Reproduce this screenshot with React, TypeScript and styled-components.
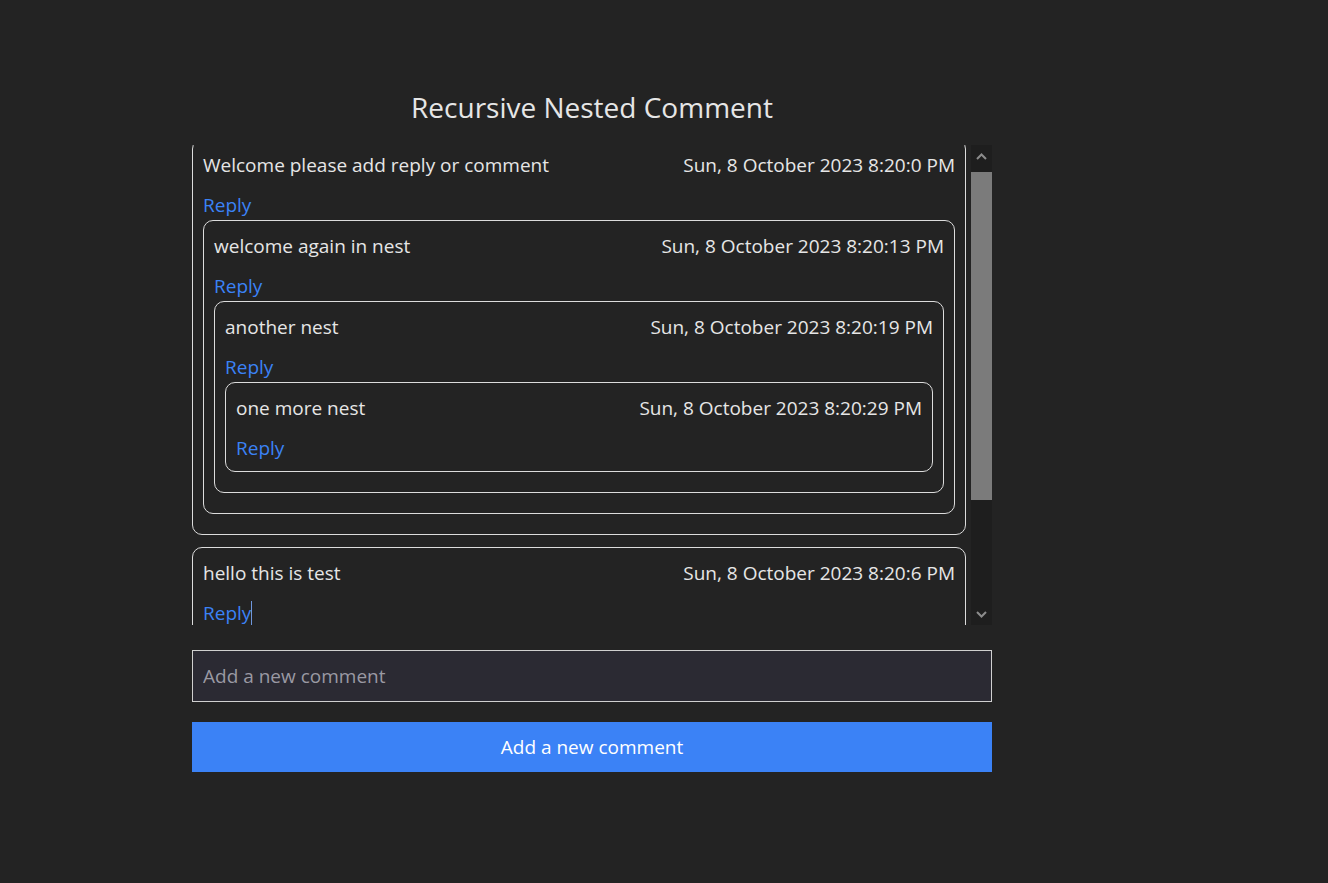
import { useLayoutEffect, useRef } from "react";
import styled, { createGlobalStyle } from "styled-components";

interface CommentData {
  id: number;
  text: string;
  date: string;
  replies: CommentData[];
}

const comments: CommentData[] = [
  {
    id: 1,
    text: "Welcome please add reply or comment",
    date: "Sun, 8 October 2023 8:20:0 PM",
    replies: [
      {
        id: 2,
        text: "welcome again in nest",
        date: "Sun, 8 October 2023 8:20:13 PM",
        replies: [
          {
            id: 3,
            text: "another nest",
            date: "Sun, 8 October 2023 8:20:19 PM",
            replies: [
              {
                id: 4,
                text: "one more nest",
                date: "Sun, 8 October 2023 8:20:29 PM",
                replies: [],
              },
            ],
          },
        ],
      },
    ],
  },
  {
    id: 5,
    text: "hello this is test",
    date: "Sun, 8 October 2023 8:20:6 PM",
    replies: [],
  },
];

const GlobalStyle = createGlobalStyle`
  body {
    margin: 0;
    background: #232323;
    color: #e6e6e6;
    font-family: "Open Sans", "Noto Sans", sans-serif;
  }
`;

const Page = styled.div`
  min-height: 883px;
  padding: 89px 0 0 192px;
  box-sizing: border-box;
`;

const Wrapper = styled.div`
  width: 800px;
  display: flex;
  flex-direction: column;
`;

const Title = styled.h1`
  margin: 0 0 20px;
  font-size: 28px;
  line-height: 36px;
  font-weight: 400;
  text-align: center;
`;

const ScrollArea = styled.div`
  display: flex;
  height: 480px;
`;

const List = styled.div`
  flex: 1;
  overflow: hidden;
`;

const Box = styled.div`
  border: 1px solid #dcdcdc;
  border-radius: 10px;
  padding: 10px 10px 8px;
  margin-bottom: 12px;
`;

const TopBox = styled(Box)`
  margin-right: 5px;
`;

const Row = styled.div`
  display: flex;
  justify-content: space-between;
  font-size: 19px;
  line-height: 30px;
`;

const ReplyLink = styled.div`
  margin-top: 10px;
  font-size: 19px;
  line-height: 30px;
  color: #3b82f6;
  cursor: pointer;
`;

const Caret = styled.span`
  display: inline-block;
  width: 1px;
  height: 24px;
  vertical-align: -5px;
  background: #6f97dc;
`;

const Scrollbar = styled.div`
  width: 21px;
  display: flex;
  flex-direction: column;
  background: #1e1e1e;
`;

const ArrowButton = styled.div`
  height: 22px;
  display: flex;
  align-items: center;
  justify-content: center;
  color: #8c8c8c;
`;

const Track = styled.div`
  flex: 1;
  padding-top: 5px;
`;

const Thumb = styled.div`
  width: 21px;
  height: 328px;
  background: #7b7b7b;
`;

const Input = styled.input`
  margin-top: 25px;
  height: 52px;
  box-sizing: border-box;
  border: 1px solid #d0d0d0;
  background: #2b2a33;
  color: #e6e6e6;
  padding: 0 10px;
  font-family: inherit;
  font-size: 19px;
  outline: none;

  &::placeholder {
    color: #9a99a3;
  }
`;

const AddButton = styled.button`
  margin-top: 20px;
  height: 50px;
  border: none;
  background: #3b82f6;
  color: #fff;
  font-family: inherit;
  font-size: 19px;
  cursor: pointer;
`;

const Chevron = ({ up }: { up?: boolean }) => (
  <svg width="11" height="7" viewBox="0 0 11 7">
    <path
      d={up ? "M1 6 L5.5 1.5 L10 6" : "M1 1 L5.5 5.5 L10 1"}
      fill="none"
      stroke="currentColor"
      strokeWidth="2"
    />
  </svg>
);

const CommentBody = ({ comment, caret }: { comment: CommentData; caret?: boolean }) => (
  <>
    <Row>
      <span>{comment.text}</span>
      <span>{comment.date}</span>
    </Row>
    <ReplyLink>
      Reply
      {caret && <Caret />}
    </ReplyLink>
    {comment.replies.map((reply) => (
      <Box key={reply.id}>
        <CommentBody comment={reply} />
      </Box>
    ))}
  </>
);

const App = () => {
  const listRef = useRef<HTMLDivElement>(null);

  useLayoutEffect(() => {
    if (listRef.current) listRef.current.scrollTop = 6;
  }, []);

  return (
    <Page>
      <GlobalStyle />
      <Wrapper>
        <Title>Recursive Nested Comment</Title>
        <ScrollArea>
          <List ref={listRef}>
            {comments.map((comment, index) => (
              <TopBox key={comment.id}>
                <CommentBody comment={comment} caret={index === comments.length - 1} />
              </TopBox>
            ))}
            <TopBox>
              <Row>
                <span>&nbsp;</span>
              </Row>
            </TopBox>
          </List>
          <Scrollbar>
            <ArrowButton>
              <Chevron up />
            </ArrowButton>
            <Track>
              <Thumb />
            </Track>
            <ArrowButton>
              <Chevron />
            </ArrowButton>
          </Scrollbar>
        </ScrollArea>
        <Input placeholder="Add a new comment" />
        <AddButton>Add a new comment</AddButton>
      </Wrapper>
    </Page>
  );
};

export default App;
